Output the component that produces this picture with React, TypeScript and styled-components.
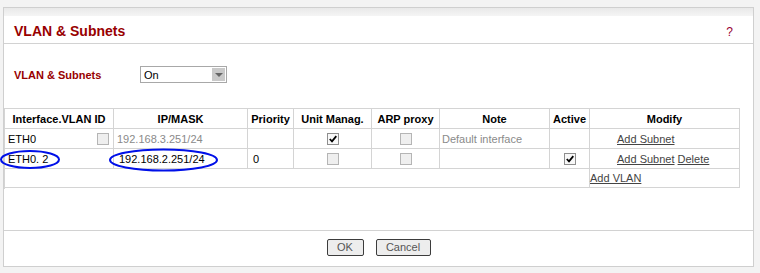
import React from "react";
import styled, { createGlobalStyle } from "styled-components";

const GlobalStyle = createGlobalStyle`
  html, body { margin: 0; padding: 0; background: #f3f3f3; }
  body {
    font-family: "Liberation Sans", Arial, sans-serif;
    font-size: 11px;
    color: #000;
  }
  * { box-sizing: border-box; }
`;

const Page = styled.div`
  position: relative;
  width: 760px;
  height: 273px;
  overflow: hidden;
  padding: 7px 0 0 3px;
`;

const Panel = styled.div`
  width: 751px;
  height: 260px;
  border: 1px solid #cfcfcf;
  background: #fff;
  display: flex;
  flex-direction: column;
`;

const TopBand = styled.div`
  height: 8px;
  background: linear-gradient(#e9e9e9, #f5f5f5);
`;

const Header = styled.div`
  height: 28px;
  border-bottom: 1px solid #d2d2d2;
  display: flex;
  align-items: center;
  justify-content: space-between;
  padding: 3px 20px 0 10px;
`;

const Title = styled.h1`
  margin: 0;
  font-size: 14px;
  font-weight: bold;
  color: #980000;
`;

const Help = styled.span`
  font-size: 12px;
  color: #990033;
  padding-top: 2px;
`;

const FormArea = styled.div`
  display: flex;
  align-items: center;
  padding: 22px 10px 25px 10px;
`;

const Label = styled.span`
  width: 126px;
  font-weight: bold;
  font-size: 11px;
  color: #980000;
`;

const Select = styled.div`
  width: 87px;
  height: 17px;
  border: 1px solid #a8a8a8;
  display: flex;
  align-items: center;
  justify-content: space-between;
  padding: 0 1px 0 3px;
  font-size: 11px;
`;

const Arrow = styled.span`
  width: 13px;
  height: 13px;
  background: #c9c9c9;
  display: flex;
  align-items: center;
  justify-content: center;
  &::after {
    content: "";
    border-left: 4px solid transparent;
    border-right: 4px solid transparent;
    border-top: 4px solid #666;
  }
`;

const Grid = styled.div`
  display: grid;
  grid-template-columns: 109px 134px 46px 78px 68px 110px 40px 150px;
  grid-auto-rows: 20px;
  width: max-content;
  border-left: 1px solid #d4d4d4;
  border-top: 1px solid #d4d4d4;
`;

const Cell = styled.div<{
  $align?: "left" | "center";
  $pad?: number;
  $head?: boolean;
  $muted?: boolean;
  $span?: number;
  $short?: boolean;
  $split?: boolean;
}>`
  border-right: 1px solid #d4d4d4;
  border-bottom: 1px solid #d4d4d4;
  display: flex;
  align-items: center;
  justify-content: ${(p) =>
    p.$split ? "space-between" : p.$align === "center" ? "center" : "flex-start"};
  padding-left: ${(p) => (p.$pad ?? 0)}px;
  padding-right: ${(p) => (p.$split ? 4 : 0)}px;
  font-weight: ${(p) => (p.$head ? "bold" : "normal")};
  color: ${(p) => (p.$muted ? "#8a8a8a" : "#000")};
  white-space: nowrap;
  ${(p) => (p.$span ? `grid-column: span ${p.$span};` : "")}
  ${(p) => (p.$short ? "height: 19px;" : "")}
`;

const Box = styled.span<{ $checked?: boolean }>`
  width: 12px;
  height: 12px;
  border: 1px solid ${(p) => (p.$checked ? "#8e8e8e" : "#b5b5b5")};
  background: ${(p) => (p.$checked ? "#f8f8f8" : "#efefef")};
  display: inline-flex;
  align-items: center;
  justify-content: center;
`;

const Link = styled.a`
  color: #444;
  text-decoration: underline;
  cursor: pointer;
`;

const Spacer = styled.div`
  flex: 1;
`;

const Footer = styled.div`
  height: 36px;
  border-top: 1px solid #d2d2d2;
  display: flex;
  justify-content: center;
  align-items: flex-start;
  gap: 12px;
  padding-top: 8px;
`;

const Button = styled.button<{ $w: number }>`
  width: ${(p) => p.$w}px;
  height: 17px;
  padding: 0;
  border: 1px solid #3c3c3c;
  border-radius: 2px;
  background: #ededed;
  color: #555;
  font-family: "Liberation Sans", Arial, sans-serif;
  font-size: 11px;
  line-height: 15px;
`;

const Annotations = styled.svg`
  position: absolute;
  left: 0;
  top: 0;
  pointer-events: none;
`;

const Check = ({ checked }: { checked?: boolean }) => (
  <Box $checked={checked}>
    {checked && (
      <svg width="10" height="10" viewBox="0 0 10 10">
        <path d="M1.8 5 L4 7.3 L8.3 2.2" fill="none" stroke="#000" strokeWidth="1.8" />
      </svg>
    )}
  </Box>
);

const headers = [
  "Interface.VLAN ID",
  "IP/MASK",
  "Priority",
  "Unit Manag.",
  "ARP proxy",
  "Note",
  "Active",
  "Modify",
];

export default function App() {
  return (
    <Page>
      <GlobalStyle />
      <Panel>
        <TopBand />
        <Header>
          <Title>VLAN &amp; Subnets</Title>
          <Help>?</Help>
        </Header>
        <FormArea>
          <Label>VLAN &amp; Subnets</Label>
          <Select>
            <span>On</span>
            <Arrow />
          </Select>
        </FormArea>
        <Grid>
          {headers.map((h) => (
            <Cell key={h} $head $align="center">
              {h}
            </Cell>
          ))}

          <Cell $pad={3} $split>
            <span>ETH0</span>
            <Check />
          </Cell>
          <Cell $pad={3} $muted>
            192.168.3.251/24
          </Cell>
          <Cell />
          <Cell $align="center">
            <Check checked />
          </Cell>
          <Cell $align="center">
            <Check />
          </Cell>
          <Cell $pad={2} $muted>
            Default interface
          </Cell>
          <Cell />
          <Cell $pad={27}>
            <Link>Add Subnet</Link>
          </Cell>

          <Cell $pad={3}>ETH0. 2</Cell>
          <Cell $pad={5}>192.168.2.251/24</Cell>
          <Cell $pad={5}>0</Cell>
          <Cell $align="center">
            <Check />
          </Cell>
          <Cell $align="center">
            <Check />
          </Cell>
          <Cell />
          <Cell $align="center">
            <Check checked />
          </Cell>
          <Cell $pad={27}>
            <Link>Add Subnet</Link>&nbsp;<Link>Delete</Link>
          </Cell>

          <Cell $span={7} $short />
          <Cell $short>
            <Link>Add VLAN</Link>
          </Cell>
        </Grid>
        <Spacer />
        <Footer>
          <Button $w={37}>OK</Button>
          <Button $w={55}>Cancel</Button>
        </Footer>
      </Panel>
      <Annotations width="760" height="273" viewBox="0 0 760 273">
        <ellipse cx="30" cy="159.5" rx="29" ry="8.5" fill="none" stroke="#0010e8" strokeWidth="2" />
        <ellipse cx="163.5" cy="160" rx="53.5" ry="10.5" fill="none" stroke="#0010e8" strokeWidth="2" />
      </Annotations>
    </Page>
  );
}
